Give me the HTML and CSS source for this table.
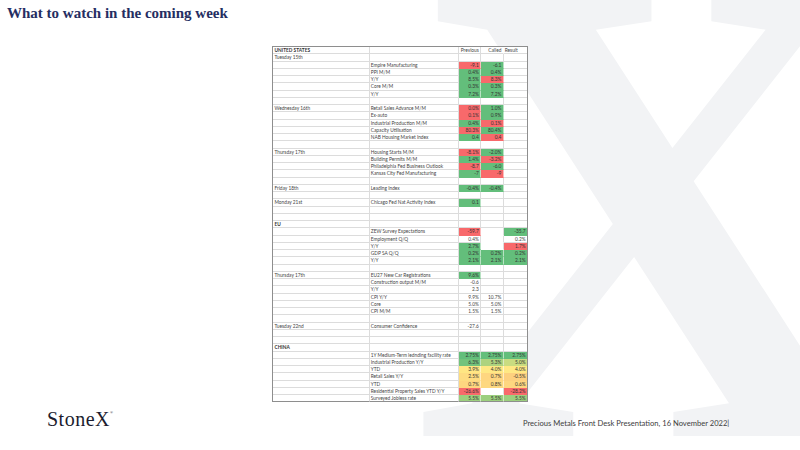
FILE: index.html
```html
<!DOCTYPE html>
<html>
<head>
<meta charset="utf-8">
<link rel="stylesheet" href="styles.css">
</head>
<body>
<div class="slide">
  <div class="watermark" aria-hidden="true"></div>
  <header class="title-bar"><h1>What to watch in the coming week</h1></header>
  <main class="table-area">
    <div class="sheet">
      <div class="b">UNITED STATES</div><div></div><div class="n">Previous</div><div class="n nr">Called</div><div>Result</div>
      <div>Tuesday 15th</div><div></div><div></div><div></div><div></div>
      <div></div><div>Empire Manufacturing</div><div class="n r">-9.1</div><div class="n g">-6.1</div><div></div>
      <div></div><div>PPI M/M</div><div class="n g">0.4%</div><div class="n g">0.4%</div><div></div>
      <div></div><div>Y/Y</div><div class="n g">8.5%</div><div class="n r">8.3%</div><div></div>
      <div></div><div>Core M/M</div><div class="n g">0.3%</div><div class="n g">0.3%</div><div></div>
      <div></div><div>Y/Y</div><div class="n g">7.2%</div><div class="n g">7.2%</div><div></div>
      <div></div><div></div><div></div><div></div><div></div>
      <div>Wednesday 16th</div><div>Retail Sales Advance M/M</div><div class="n r">0.0%</div><div class="n g">1.0%</div><div></div>
      <div></div><div>Ex-auto</div><div class="n r">0.1%</div><div class="n g">0.9%</div><div></div>
      <div></div><div>Industrial Production M/M</div><div class="n g">0.4%</div><div class="n r">0.1%</div><div></div>
      <div></div><div>Capacity Utilisation</div><div class="n r">80.3%</div><div class="n g">80.4%</div><div></div>
      <div></div><div>NAB Housing Market Index</div><div class="n g">0.4</div><div class="n r">0.4</div><div></div>
      <div></div><div></div><div></div><div></div><div></div>
      <div>Thursday 17th</div><div>Housing Starts M/M</div><div class="n r">-8.1%</div><div class="n g">-2.0%</div><div></div>
      <div></div><div>Building Permits M/M</div><div class="n g">1.4%</div><div class="n r">-3.2%</div><div></div>
      <div></div><div>Philadelphia Fed Business Outlook</div><div class="n r">-8.7</div><div class="n g">-6.0</div><div></div>
      <div></div><div>Kansas City Fed Manufacturing</div><div class="n g">-7</div><div class="n r">-9</div><div></div>
      <div></div><div></div><div></div><div></div><div></div>
      <div>Friday 18th</div><div>Leading Index</div><div class="n g">-0.4%</div><div class="n g">-0.4%</div><div></div>
      <div></div><div></div><div></div><div></div><div></div>
      <div>Monday 21st</div><div>Chicago Fed Nat Activity Index</div><div class="n g">0.1</div><div></div><div></div>
      <div></div><div></div><div></div><div></div><div></div>
      <div></div><div></div><div></div><div></div><div></div>
      <div class="b">EU</div><div></div><div></div><div></div><div></div>
      <div></div><div>ZEW Survey Expectations</div><div class="n r">-59.7</div><div class="w"></div><div class="n g">-35.7</div>
      <div></div><div>Employment Q/Q</div><div class="n">0.4%</div><div class="w"></div><div class="n">0.2%</div>
      <div></div><div>Y/Y</div><div class="n g">2.7%</div><div class="w"></div><div class="n r">1.7%</div>
      <div></div><div>GDP SA Q/Q</div><div class="n g">0.2%</div><div class="n g">0.2%</div><div class="n g">0.2%</div>
      <div></div><div>Y/Y</div><div class="n g">2.1%</div><div class="n g">2.1%</div><div class="n g">2.1%</div>
      <div></div><div></div><div></div><div></div><div></div>
      <div>Thursday 17th</div><div>EU27 New Car Registrations</div><div class="n g">9.6%</div><div></div><div></div>
      <div></div><div>Construction output M/M</div><div class="n">-0.6</div><div></div><div></div>
      <div></div><div>Y/Y</div><div class="n">2.3</div><div></div><div></div>
      <div></div><div>CPI Y/Y</div><div class="n">9.9%</div><div class="n">10.7%</div><div></div>
      <div></div><div>Core</div><div class="n">5.0%</div><div class="n">5.0%</div><div></div>
      <div></div><div>CPI M/M</div><div class="n">1.5%</div><div class="n">1.5%</div><div></div>
      <div></div><div></div><div></div><div></div><div></div>
      <div>Tuesday 22nd</div><div>Consumer Confidence</div><div class="n">-27.6</div><div></div><div></div>
      <div></div><div></div><div></div><div></div><div></div>
      <div></div><div></div><div></div><div></div><div></div>
      <div class="b">CHINA</div><div></div><div></div><div></div><div></div>
      <div></div><div>1Y Medium-Term lednding facility rate</div><div class="n g">2.75%</div><div class="n g">2.75%</div><div class="n g">2.75%</div>
      <div></div><div>Industrial Production Y/Y</div><div class="n g1">6.3%</div><div class="n g2">5.3%</div><div class="n g3">5.0%</div>
      <div></div><div>YTD</div><div class="n y1">3.9%</div><div class="n y2">4.0%</div><div class="n y2">4.0%</div>
      <div></div><div>Retail Sales Y/Y</div><div class="n o1">2.5%</div><div class="n o2">0.7%</div><div class="n o3">-0.5%</div>
      <div></div><div>YTD</div><div class="n o2">0.7%</div><div class="n o4">0.8%</div><div class="n o2">0.6%</div>
      <div></div><div>Residential Property Sales YTD Y/Y</div><div class="n r">-26.6%</div><div class="w"></div><div class="n r">-28.2%</div>
      <div></div><div>Surveyed Jobless rate</div><div class="n sg">5.5%</div><div class="n sg">5.5%</div><div class="n sg">5.5%</div>
    </div>
  </main>
  <footer class="footer">
    <div class="logo">StoneX<sup>®</sup></div>
    <div class="foot-text">Precious Metals Front Desk Presentation, 16 November 2022|</div>
  </footer>
</div>
</body>
</html>
```

FILE: styles.css
```css
* { box-sizing: border-box; }
html, body { margin: 0; padding: 0; }
body {
  width: 800px;
  height: 450px;
  overflow: hidden;
  background: #ffffff;
  font-family: "Lato", "Liberation Sans", sans-serif;
}
.slide {
  position: relative;
  width: 800px;
  height: 450px;
  display: flex;
  flex-direction: column;
  overflow: hidden;
}
.watermark {
  position: absolute;
  left: 411px;
  top: -125px;
  width: 500px;
  height: 700px;
  z-index: 0;
  pointer-events: none;
}
.watermark::before {
  content: "X";
  display: block;
  font-family: "Liberation Serif", "Times New Roman", serif;
  font-weight: 700;
  font-size: 670px;
  line-height: 1;
  color: #f2f3f5;
}
.title-bar {
  position: relative;
  z-index: 1;
  height: 46px;
  padding: 5px 0 0 7px;
}
.title-bar h1 {
  margin: 0;
  font-family: "Liberation Serif", "Times New Roman", serif;
  font-weight: 700;
  font-size: 15px;
  line-height: 17px;
  color: #252e62;
}
.table-area {
  position: relative;
  z-index: 1;
  display: flex;
  justify-content: center;
}
.sheet {
  display: grid;
  grid-template-columns: 96.3px 89px 22.4px 22.6px 23.2px;
  grid-auto-rows: 7.25px;
  border: 1px solid #8e8e8e;
  border-bottom: 0;
  background: #ffffff;
  font-size: 4.8px;
  color: #444;
}
.sheet > div {
  border-right: 1px solid #dcdcdc;
  border-bottom: 1px solid #dcdcdc;
  padding: 0 1.2px;
  line-height: 6.25px;
  white-space: nowrap;
  overflow: visible;
}
.sheet > div:nth-child(5n) { border-right: 0; }
.sheet > div:nth-last-child(-n+5) { border-bottom: 1px solid #8e8e8e; }
.sheet .b { font-weight: 700; color: #333; }
.sheet .n { text-align: right; }
.sheet .nr { border-right-color: transparent; }
.sheet .w { border-bottom-color: #ffffff; }
.sheet .r, .sheet .g, .sheet .g1, .sheet .g2, .sheet .g3,
.sheet .y1, .sheet .y2, .sheet .o1, .sheet .o2, .sheet .o3, .sheet .o4, .sheet .sg {
  border-bottom-color: transparent;
  border-right-color: rgba(255, 255, 255, 0.55);
  color: #333;
}
.sheet .r { background: #f8696b; }
.sheet .g { background: #63be7b; }
.sheet .g1 { background: #72c37c; }
.sheet .g2 { background: #aed37f; }
.sheet .g3 { background: #c9dc81; }
.sheet .y1 { background: #ffe683; }
.sheet .y2 { background: #ffe884; }
.sheet .o1 { background: #fedc81; }
.sheet .o2 { background: #fed680; }
.sheet .o3 { background: #fdd07f; }
.sheet .o4 { background: #fed880; }
.sheet .sg { background: #9ccf7e; }
.footer {
  position: relative;
  z-index: 1;
  flex: 1;
  display: grid;
  grid-template-columns: 523px 1fr;
  align-items: start;
}
.logo {
  padding-left: 47px;
  margin-top: 1px;
  font-family: "Liberation Serif", "Times New Roman", serif;
  font-size: 20px;
  letter-spacing: 0.5px;
  color: #1b1c2e;
  line-height: 20px;
}
.logo sup {
  font-size: 4px;
  vertical-align: 12px;
  letter-spacing: 0;
}
.foot-text {
  margin-top: 15.5px;
  font-size: 7.6px;
  line-height: 10px;
  color: #404040;
  white-space: nowrap;
}
```
